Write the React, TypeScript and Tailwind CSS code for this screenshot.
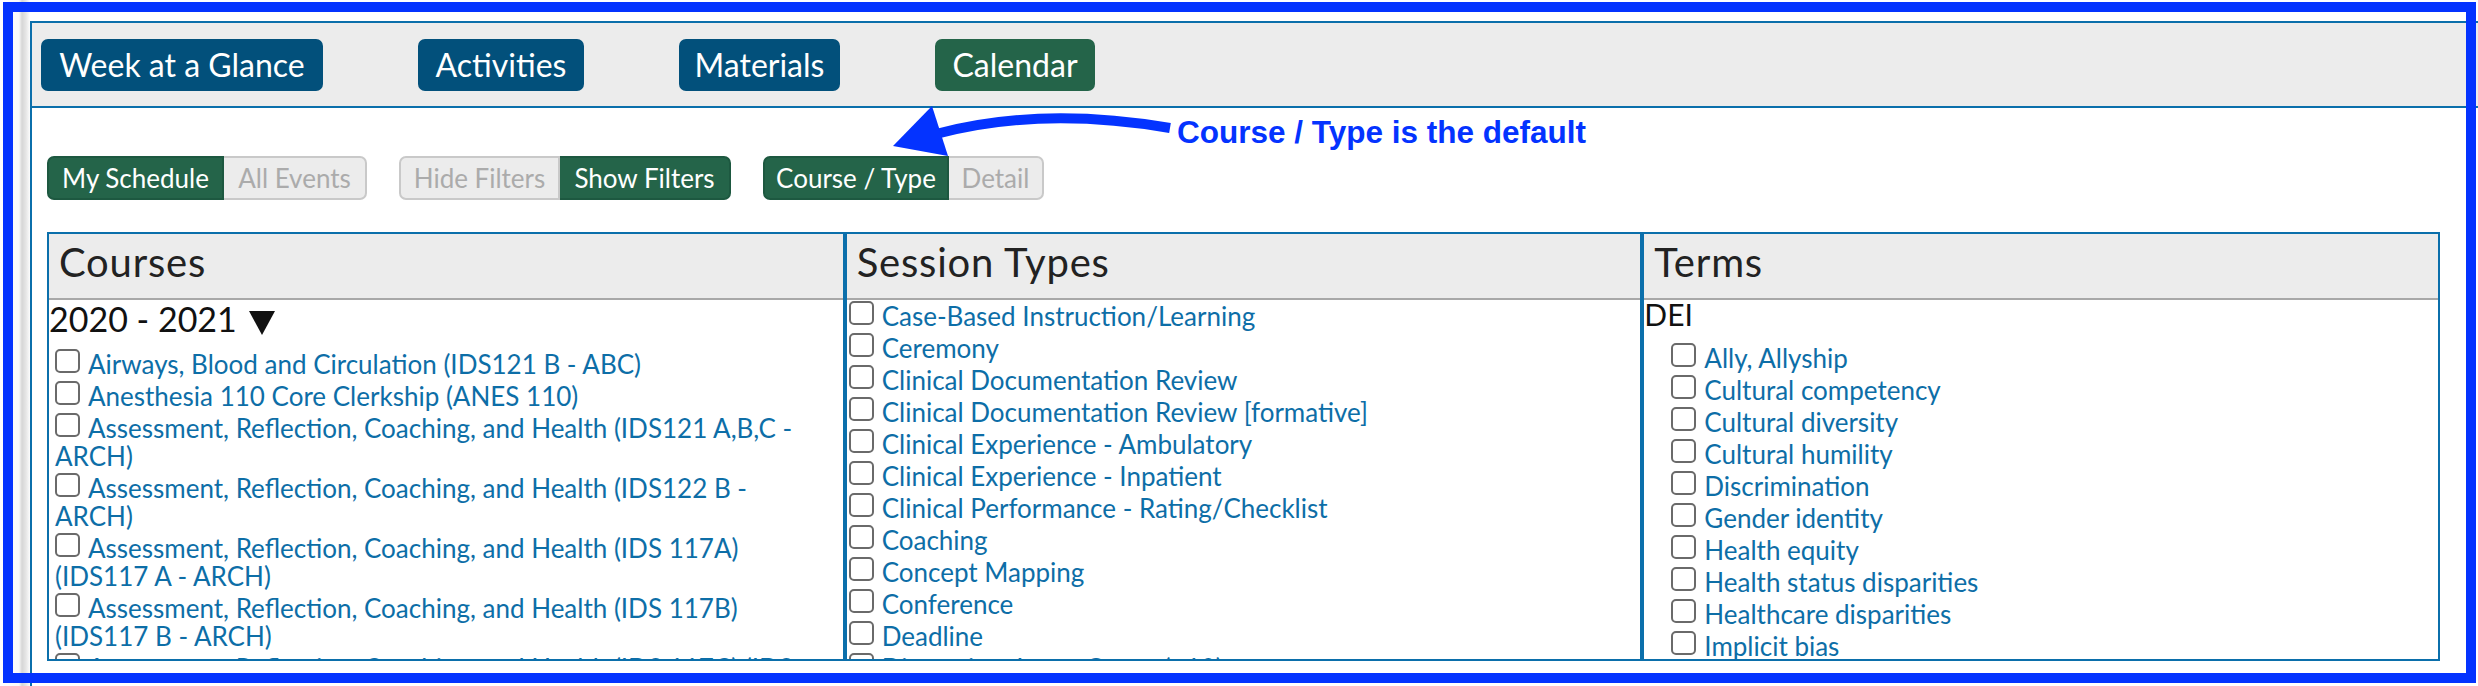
import React from 'react';

type NavItem = { label: string; width: string; green?: boolean };

const navItems: NavItem[] = [
  { label: 'Week at a Glance', width: 'w-[282px]' },
  { label: 'Activities', width: 'w-[166px]' },
  { label: 'Materials', width: 'w-[161px]' },
  { label: 'Calendar', width: 'w-[160px]', green: true },
];

type Toggle = { label: string; width: string; active: boolean };

const toggleGroups: Toggle[][] = [
  [
    { label: 'My Schedule', width: 'w-[177px]', active: true },
    { label: 'All Events', width: 'w-[143px]', active: false },
  ],
  [
    { label: 'Hide Filters', width: 'w-[161px]', active: false },
    { label: 'Show Filters', width: 'w-[171px]', active: true },
  ],
  [
    { label: 'Course / Type', width: 'w-[186px]', active: true },
    { label: 'Detail', width: 'w-[95px]', active: false },
  ],
];

// each course is a list of lines (the original wraps them under the checkbox)
const courses: string[][] = [
  ['Airways, Blood and Circulation (IDS121 B - ABC)'],
  ['Anesthesia 110 Core Clerkship (ANES 110)'],
  ['Assessment, Reflection, Coaching, and Health (IDS121 A,B,C -', 'ARCH)'],
  ['Assessment, Reflection, Coaching, and Health (IDS122 B -', 'ARCH)'],
  ['Assessment, Reflection, Coaching, and Health (IDS 117A)', '(IDS117 A - ARCH)'],
  ['Assessment, Reflection, Coaching, and Health (IDS 117B)', '(IDS117 B - ARCH)'],
  ['Assessment, Reflection, Coaching, and Health (IDS 117C) (IDS', '117 C - ARCH)'],
];

const sessionTypes = [
  'Case-Based Instruction/Learning',
  'Ceremony',
  'Clinical Documentation Review',
  'Clinical Documentation Review [formative]',
  'Clinical Experience - Ambulatory',
  'Clinical Experience - Inpatient',
  'Clinical Performance - Rating/Checklist',
  'Coaching',
  'Concept Mapping',
  'Conference',
  'Deadline',
  'Discussion, Large Group (>12)',
];

const terms = [
  'Ally, Allyship',
  'Cultural competency',
  'Cultural diversity',
  'Cultural humility',
  'Discrimination',
  'Gender identity',
  'Health equity',
  'Health status disparities',
  'Healthcare disparities',
  'Implicit bias',
  'Inclusion',
];

const Box: React.FC = () => (
  <span className="inline-block align-[1px] w-[25px] h-[24px] mr-[8px] bg-white border-2 border-[#6a6a6a] rounded-[5px]" />
);

const CheckItem: React.FC<{ lines: string[] }> = ({ lines }) => (
  <div className="pt-[1px] pb-[2px] leading-[28px] text-[26px] text-[#0d6ea7] whitespace-nowrap">
    <Box />
    {lines.map((line, i) => (
      <React.Fragment key={i}>
        {i > 0 && <br />}
        {line}
      </React.Fragment>
    ))}
  </div>
);

const Panel: React.FC<{ title: string; children: React.ReactNode }> = ({ title, children }) => (
  <div className="flex flex-col border-2 border-[#0b6fab] h-[429px] min-w-0">
    <div className="h-[66px] shrink-0 bg-[#ececec] border-b-2 border-[#a8a8a8] pl-[10px]">
      <div className="leading-[56px] text-[40px] tracking-[0.8px] text-[#222]">{title}</div>
    </div>
    <div className="flex-1 overflow-hidden bg-white">{children}</div>
  </div>
);

const App: React.FC = () => {
  return (
    <div className="relative w-[2478px] h-[686px] overflow-hidden bg-white font-['Lato',sans-serif]">
      <div className="flex h-full">
        {/* shadow strip left of the page */}
        <div className="w-[30px] shrink-0 bg-[linear-gradient(to_right,#ffffff_0px,#fafafa_19px,#d6d6d6_22px,#e6e6e6_26px,#fdfdfd_30px)]" />

        <div className="flex-1 mt-[21px] border-l-2 border-t-2 border-[#0b6fab]">
          {/* top nav */}
          <div className="h-[85px] bg-[#ececec] border-b-2 border-[#0b6fab] pl-[9px] flex items-center gap-[95px]">
            {navItems.map((item) => (
              <div
                key={item.label}
                className={
                  item.green
                    ? `${item.width} h-[52px] rounded-[7px] bg-[#246449] text-white text-[32px] leading-[52px] text-center`
                    : `${item.width} h-[52px] rounded-[7px] bg-[#02507b] text-white text-[32px] leading-[52px] text-center`
                }
              >
                {item.label}
              </div>
            ))}
          </div>

          {/* toggles */}
          <div className="mt-[48px] pl-[15px] flex gap-[32px]">
            {toggleGroups.map((group, gi) => (
              <div key={gi} className="flex">
                {group.map((t, ti) => {
                  const first = ti === 0;
                  const shape = first ? 'rounded-l-[7px] border-2' : 'rounded-r-[7px] border-2 border-l-0';
                  const look = t.active
                    ? 'bg-[#246449] border-[#1d5840] text-white'
                    : 'bg-[#ececec] border-[#c9c9c9] text-[#ababab]';
                  return (
                    <div
                      key={t.label}
                      className={`${t.width} ${shape} ${look} h-[44px] text-[26px] leading-[40px] text-center`}
                    >
                      {t.label}
                    </div>
                  );
                })}
              </div>
            ))}
          </div>

          {/* filter panels */}
          <div className="mt-[32px] ml-[15px] w-[2393px] grid grid-cols-3">
            <Panel title="Courses">
              <div className="leading-[38px] text-[34px] text-[#111] mb-[10px] whitespace-nowrap">
                2020 - 2021
                <svg className="inline-block ml-[12px]" width="26" height="24" viewBox="0 0 26 24">
                  <polygon points="0,0 26,0 13,24" fill="#111" />
                </svg>
              </div>
              <div className="pl-[6px]">
                {courses.map((c, i) => (
                  <CheckItem key={i} lines={c} />
                ))}
              </div>
            </Panel>

            <Panel title="Session Types">
              <div className="pl-[2px]">
                {sessionTypes.map((s) => (
                  <CheckItem key={s} lines={[s]} />
                ))}
              </div>
            </Panel>

            <Panel title="Terms">
              <div className="leading-[28px] text-[30px] text-[#111] mb-[14px]">DEI</div>
              <div className="pl-[27px]">
                {terms.map((t) => (
                  <CheckItem key={t} lines={[t]} />
                ))}
              </div>
            </Panel>
          </div>
        </div>
      </div>

      {/* annotation overlay */}
      <div className="absolute left-[3px] top-[2px] w-[2473px] h-[681px] border-[10px] border-[#0433ff] pointer-events-none" />
      <svg className="absolute left-0 top-0 pointer-events-none" width="2478" height="686" viewBox="0 0 2478 686">
        <path d="M 1170 128 Q 1040 106 936 134" stroke="#0433ff" strokeWidth="10" fill="none" />
        <polygon points="893,146 932,106 948,156" fill="#0433ff" />
      </svg>
      <div className="absolute left-[1177px] top-[117px] leading-none text-[31.5px] font-bold text-[#0433ff] whitespace-nowrap font-['Liberation_Sans',Arial,sans-serif]">
        Course / Type is the default
      </div>
    </div>
  );
};

export default App;
